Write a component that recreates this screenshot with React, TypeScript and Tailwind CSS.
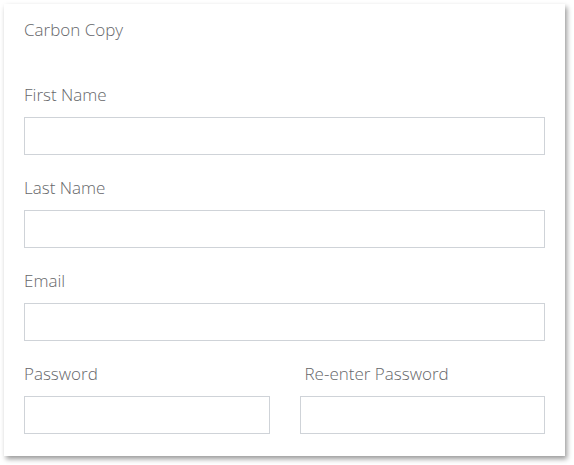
import React from 'react';

const Field: React.FC<{ label: string; type?: string; className?: string; labelClass?: string }> = ({
  label,
  type = 'text',
  className = '',
  labelClass = '',
}) => (
  <div className={`flex flex-col ${className}`}>
    <label className={`text-[17px] font-light leading-6 text-[#66676a] ${labelClass}`}>{label}</label>
    <input
      type={type}
      className="mt-[10px] h-[38px] w-full border border-[#cfd3d8] bg-white px-2 text-base outline-none"
    />
  </div>
);

const App: React.FC = () => {
  return (
    <div className="min-h-screen bg-white p-1 font-['Open_Sans',sans-serif]">
      <form className="w-[561px] bg-white px-5 pt-[14px] pb-[22px] shadow-[2px_3px_5px_rgba(0,0,0,0.4)]">
        <h2 className="text-[17px] font-light leading-6 text-[#66676a]">Carbon Copy</h2>
        <Field label="First Name" className="mt-[41px]" />
        <Field label="Last Name" className="mt-[21px]" />
        <Field label="Email" type="email" className="mt-[21px]" />
        <div className="mt-[21px] grid grid-cols-2 gap-[30px]">
          <Field label="Password" type="password" />
          <Field label="Re-enter Password" type="password" labelClass="pl-[5px]" />
        </div>
      </form>
    </div>
  );
};

export default App;
